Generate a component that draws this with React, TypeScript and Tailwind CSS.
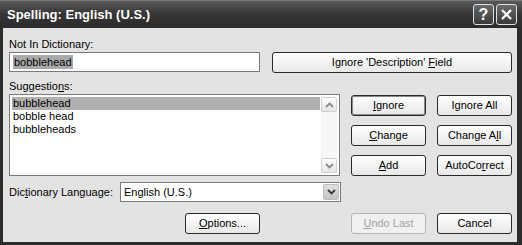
import React from "react";

const font = { fontFamily: "'Liberation Sans', Arial, sans-serif" };

function Btn({
  children,
  w = "w-[75px]",
  def = false,
  disabled = false,
}: {
  children: React.ReactNode;
  w?: string;
  def?: boolean;
  disabled?: boolean;
}) {
  const border = disabled
    ? "border-[#b5b5b5] text-[#a3a3a3] bg-[#f0f0f0]"
    : def
      ? "border-[#2a2a2a] text-black bg-gradient-to-b from-white to-[#e8e8e8] shadow-[inset_0_0_0_1px_#8a8a8a]"
      : "border-[#2a2a2a] text-black bg-gradient-to-b from-white to-[#e8e8e8]";
  return (
    <div
      className={`${w} h-[21px] flex items-center justify-center whitespace-nowrap rounded-[3px] border text-[11px] leading-none ${border}`}
    >
      {children}
    </div>
  );
}

function Chevron({ up = false, color = "#8a8a8a" }: { up?: boolean; color?: string }) {
  return (
    <svg width="9" height="6" viewBox="0 0 9 6">
      <path
        d={up ? "M1 5 L4.5 1.5 L8 5" : "M1 1 L4.5 4.5 L8 1"}
        fill="none"
        stroke={color}
        strokeWidth="1.8"
      />
    </svg>
  );
}

export default function App() {
  return (
    <div className="w-[522px] h-[245px] flex flex-col bg-[#2c2c2c] select-none" style={font}>
      {/* title bar */}
      <div className="h-[28px] flex items-center justify-between pl-[7px] pr-[5px] bg-gradient-to-b from-[#5a5a5a] via-[#353535] to-[#2c2c2c] border-t border-[#777]">
        <span className="text-white text-[13px] font-bold">Spelling: English (U.S.)</span>
        <div className="flex gap-[2px]">
          <div className="w-[21px] h-[21px] rounded-[3px] border border-[#e0e0e0] bg-gradient-to-b from-[#6a6a6a] to-[#3a3a3a] flex items-center justify-center text-white text-[16px] font-bold leading-none">
            ?
          </div>
          <div className="w-[21px] h-[21px] rounded-[3px] border border-[#e0e0e0] bg-gradient-to-b from-[#6a6a6a] to-[#3a3a3a] flex items-center justify-center">
            <svg width="13" height="13" viewBox="0 0 13 13">
              <path d="M2 2 L11 11 M11 2 L2 11" stroke="white" strokeWidth="2.4" />
            </svg>
          </div>
        </div>
      </div>

      {/* body */}
      <div className="flex-1 ml-[3px] mr-[5px] mb-[3px] bg-[#e3e3e3] pl-[6px] pr-[5px] flex flex-col text-[11px] text-black">
        <div className="mt-[9px] h-[14px] leading-[14px]">Not In Dictionary:</div>
        <div className="mt-[1px] flex gap-[12px]">
          <div className="w-[251px] h-[20px] border border-[#7a7a7a] bg-white flex items-center pl-[3px]">
            <span className="bg-[#a9a9a9] px-[1px] leading-[14px]">bobblehead</span>
          </div>
          <Btn w="w-[240px]">
            Ignore 'Description' <u className="ml-[3px]">F</u>ield
          </Btn>
        </div>

        <div className="mt-[6px] h-[14px] leading-[14px]">
          Suggestio<u>n</u>s:
        </div>
        <div className="mt-[1px] flex gap-[11px]">
          <div className="w-[331px] h-[82px] border border-[#7a7a7a] bg-white flex p-[2px] gap-[1px]">
            <div className="flex-1 flex flex-col leading-[13px]">
              <div className="bg-[#b0b0b0] pl-[1px] h-[13px]">bubblehead</div>
              <div className="pl-[1px] h-[13px]">bobble head</div>
              <div className="pl-[1px] h-[13px]">bubbleheads</div>
            </div>
            <div className="w-[16px] flex flex-col justify-between bg-[#f7f7f7]">
              <div className="h-[15px] rounded-[2px] border border-[#cfcfcf] bg-gradient-to-b from-white to-[#e6e6e6] flex items-center justify-center">
                <Chevron up />
              </div>
              <div className="h-[15px] rounded-[2px] border border-[#cfcfcf] bg-gradient-to-b from-white to-[#e6e6e6] flex items-center justify-center">
                <Chevron />
              </div>
            </div>
          </div>
          <div className="flex flex-col gap-[9px] pt-[1px]">
            <div className="flex gap-[11px]">
              <Btn def>
                <u>I</u>gnore
              </Btn>
              <Btn>
                I<u>g</u>nore All
              </Btn>
            </div>
            <div className="flex gap-[11px]">
              <Btn>
                <u>C</u>hange
              </Btn>
              <Btn>
                Change A<u>l</u>l
              </Btn>
            </div>
            <div className="flex gap-[11px]">
              <Btn>
                <u>A</u>dd
              </Btn>
              <Btn>
                AutoCo<u>r</u>rect
              </Btn>
            </div>
          </div>
        </div>

        <div className="mt-[6px] flex items-center">
          <div className="w-[111px] whitespace-nowrap">
            Dic<u>t</u>ionary Language:
          </div>
          <div className="w-[221px] h-[20px] border border-[#7a7a7a] bg-white flex items-center justify-between pl-[3px] pr-[1px]">
            <span>English (U.S.)</span>
            <div className="w-[16px] h-[16px] rounded-[2px] bg-gradient-to-b from-[#e0e0e0] to-[#c4c4c4] border border-[#bdbdbd] flex items-center justify-center">
              <Chevron color="#3a3a3a" />
            </div>
          </div>
        </div>

        <div className="mt-[11px] flex">
          <div className="ml-[176px]">
            <Btn>
              <u>O</u>ptions...
            </Btn>
          </div>
          <div className="ml-[91px] flex gap-[11px]">
            <Btn disabled>
              <u>U</u>ndo Last
            </Btn>
            <Btn>Cancel</Btn>
          </div>
        </div>
      </div>
    </div>
  );
}
